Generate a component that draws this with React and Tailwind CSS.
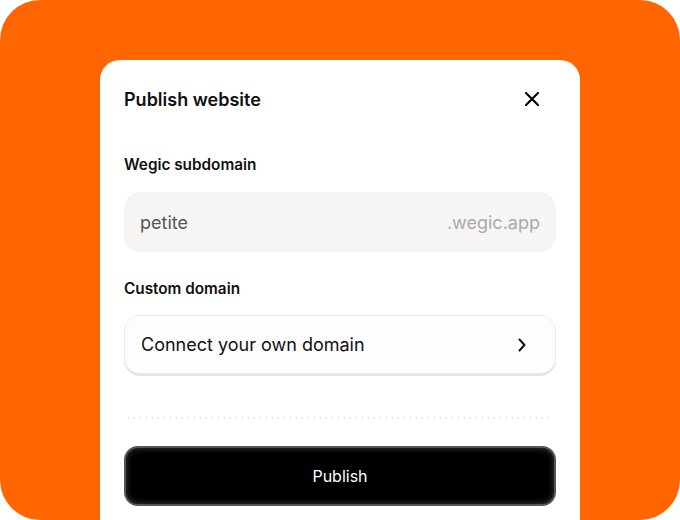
import React from 'react';

export default function App() {
  return (
    <div className="w-[680px] h-[520px] bg-white" style={{ fontFamily: 'Inter, "Liberation Sans", sans-serif' }}>
      <div className="h-full rounded-[40px] bg-[#FF6600] overflow-hidden pt-[60px]">
        <div className="w-[480px] h-full mx-auto bg-white rounded-t-[20px] px-6 pt-[26px]">
          {/* Header */}
          <div className="flex items-center justify-between h-[26px]">
            <h1 className="text-[18px] font-semibold text-[#111]">Publish website</h1>
            <button className="w-6 h-6 flex items-center justify-center mr-[12px] text-black">
              <svg width="16" height="16" viewBox="0 0 16 16" fill="none">
                <path d="M2 2L14 14M14 2L2 14" stroke="currentColor" strokeWidth="2.2" strokeLinecap="round" />
              </svg>
            </button>
          </div>

          {/* Subdomain */}
          <div className="mt-[43px] text-[15.3px] leading-5 font-semibold text-[#111]">Wegic subdomain</div>
          <div className="mt-[17px] h-[60px] rounded-2xl bg-[#F6F5F3] flex items-center justify-between px-4 text-[18px]">
            <span className="text-[#555]">petite</span>
            <span className="text-[#aaa]">.wegic.app</span>
          </div>

          {/* Custom domain */}
          <div className="mt-[27px] text-[15.3px] leading-5 font-semibold text-[#111]">Custom domain</div>
          <div className="mt-[16px] h-[59px] rounded-2xl bg-[#FDFDFD] border border-[#EDEDED] shadow-[0_2px_0_#E5E5E5] flex items-center justify-between pl-4 pr-7 text-[18px]">
            <span className="text-[#111]">Connect your own domain</span>
            <svg width="10" height="16" viewBox="0 0 10 16" fill="none">
              <path d="M2.5 2.5L7.5 8L2.5 13.5" stroke="#111" strokeWidth="2" strokeLinecap="round" strokeLinejoin="round" />
            </svg>
          </div>

          {/* Divider */}
          <svg className="mt-[43px] block" width="432" height="2" viewBox="0 0 432 2">
            <line x1="4" y1="1" x2="430" y2="1" stroke="#C4C4C4" strokeWidth="1" strokeDasharray="1 5" />
          </svg>

          {/* Publish */}
          <button className="mt-[27px] w-full h-[60px] rounded-[14px] bg-black border-2 border-[#555] shadow-[inset_0_0_6px_rgba(255,255,255,0.25)] text-white text-[16px]">
            Publish
          </button>
        </div>
      </div>
    </div>
  );
}
